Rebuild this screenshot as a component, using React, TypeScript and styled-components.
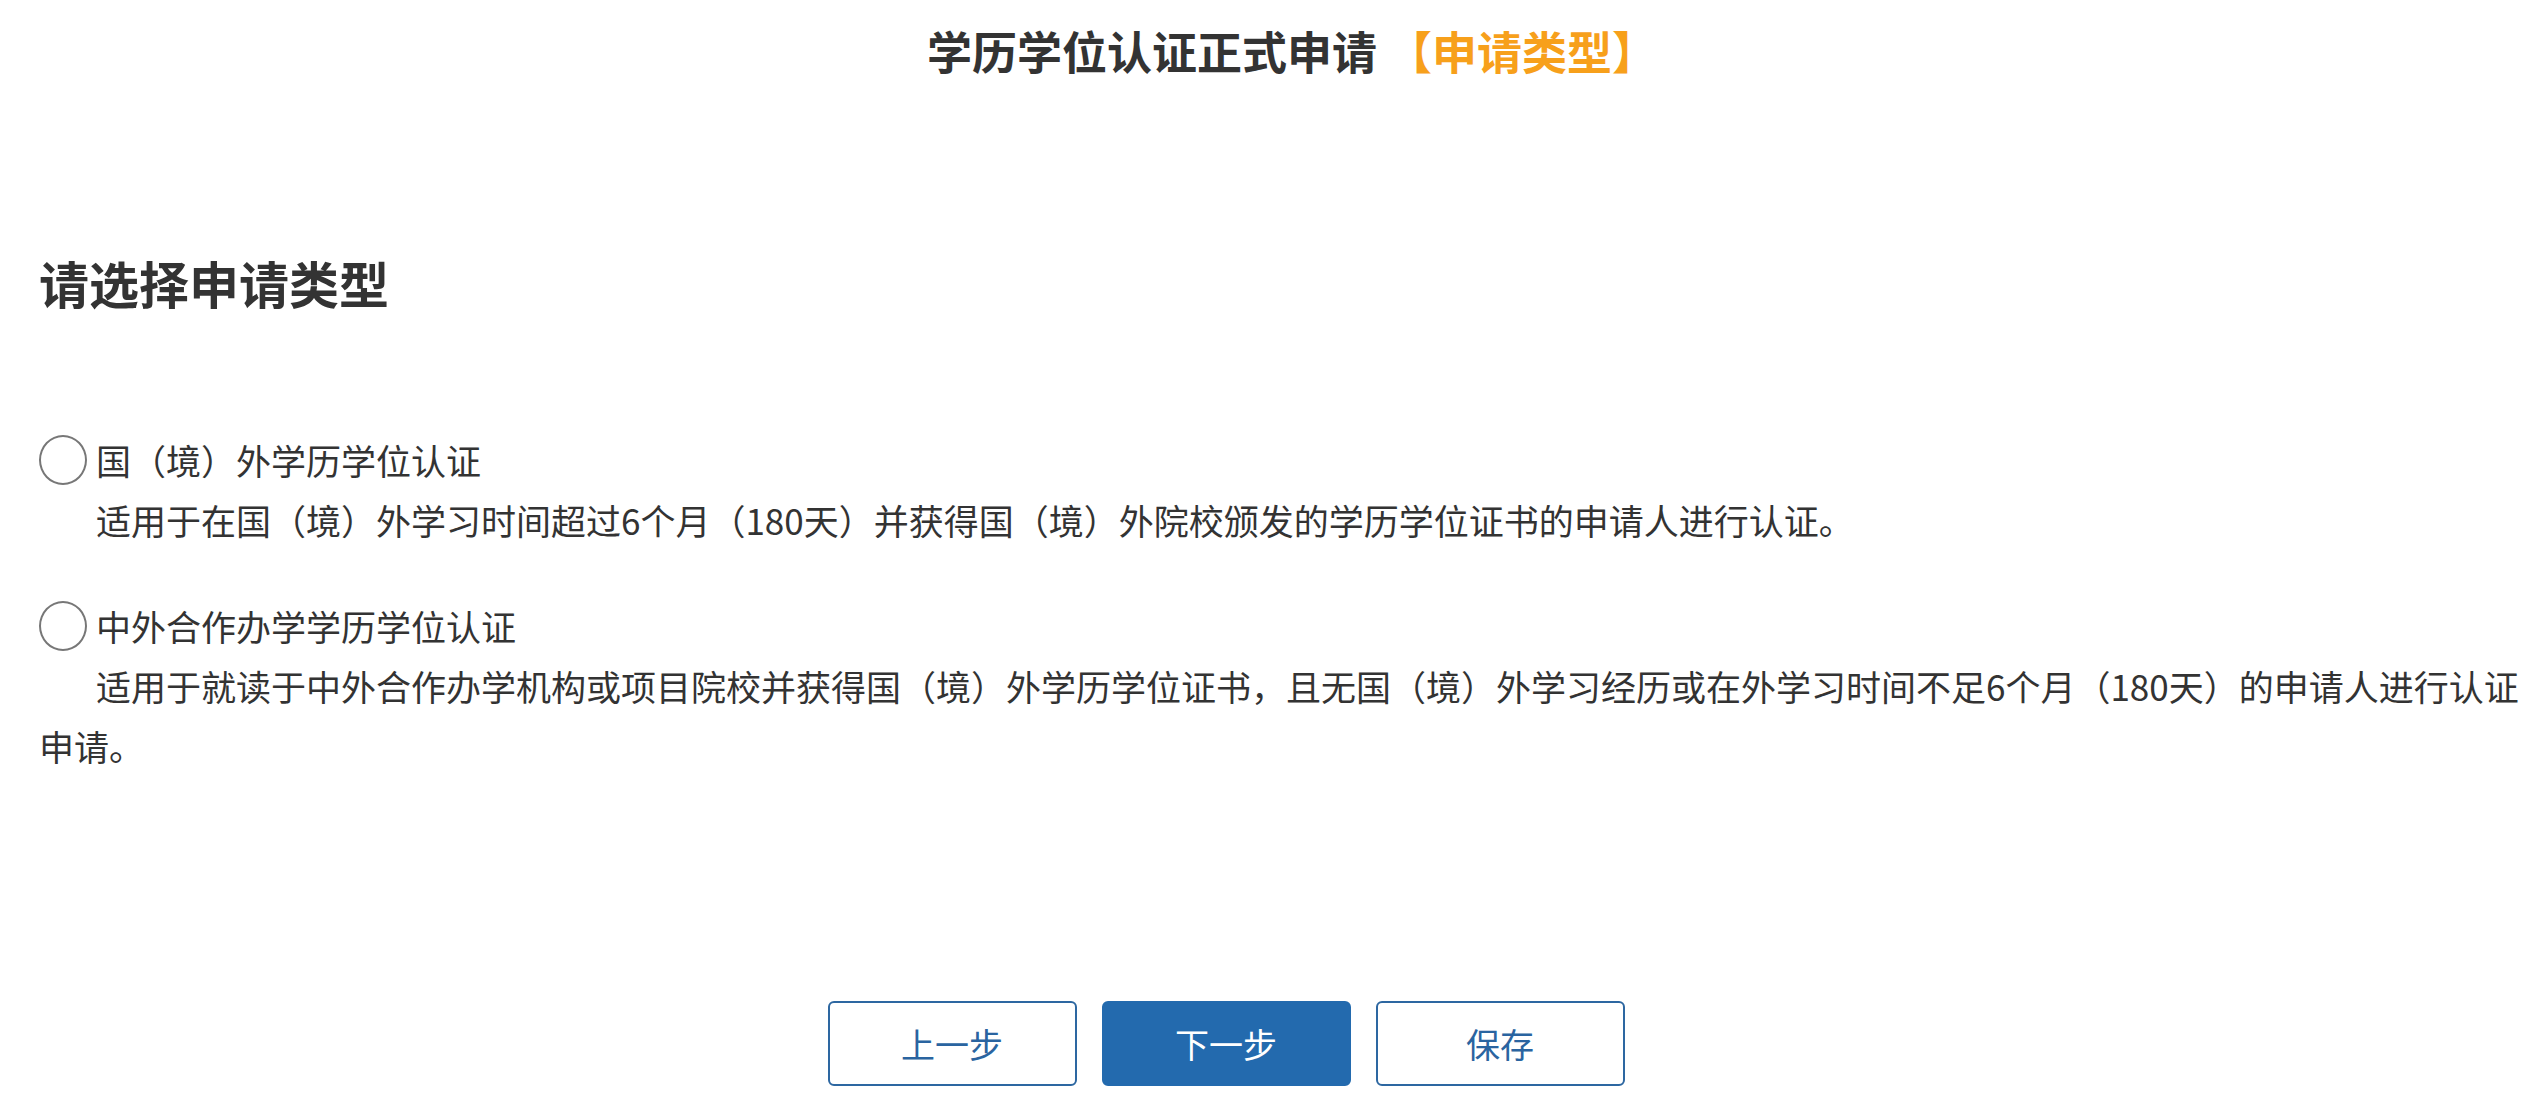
import styled, { createGlobalStyle } from 'styled-components';

const GlobalStyle = createGlobalStyle`
  html, body {
    margin: 0;
    padding: 0;
    background: #ffffff;
  }
  body {
    font-family: "Noto Sans CJK SC", "Noto Sans", sans-serif;
    color: #333333;
  }
`;

const Page = styled.div`
  padding: 0 0 0 39px;
  box-sizing: border-box;
  width: 2545px;
`;

const Title = styled.h1`
  margin: 0;
  padding-top: 22px;
  line-height: 58px;
  font-size: 45px;
  font-weight: 700;
  text-align: center;
  color: #333333;
`;

const Highlight = styled.span`
  color: #f7a01b;
`;

const Heading = styled.h2`
  margin: 167px 0 0;
  line-height: 70px;
  font-size: 50px;
  font-weight: 700;
  color: #333333;
`;

const OptionList = styled.div`
  margin-top: 113px;
  display: flex;
  flex-direction: column;
  gap: 46px;
`;

const Option = styled.div`
  font-size: 35px;
  line-height: 60px;
  color: #333333;
`;

const OptionLabel = styled.label`
  display: flex;
  align-items: center;
  height: 60px;
  cursor: pointer;
`;

const Radio = styled.span<{ $checked?: boolean }>`
  width: 48px;
  height: 50px;
  box-sizing: border-box;
  border: 2px solid #777777;
  border-radius: 50%;
  margin-right: 9px;
  flex-shrink: 0;
  background: ${p => (p.$checked ? '#236aae' : '#ffffff')};
`;

const Description = styled.p`
  margin: 0;
  text-indent: 57px;
`;

const ButtonArea = styled.div`
  margin-top: 225px;
  display: flex;
  justify-content: center;
  gap: 25px;
  padding-right: 132px;
`;

const StepButton = styled.button<{ $primary?: boolean }>`
  width: 249px;
  height: 85px;
  box-sizing: border-box;
  border: 2px solid ${p => (p.$primary ? '#236aae' : '#2d67a1')};
  border-radius: 6px;
  background: ${p => (p.$primary ? '#236aae' : '#ffffff')};
  color: ${p => (p.$primary ? '#ffffff' : '#2a64a0')};
  font-family: "Noto Sans CJK SC", "Noto Sans", sans-serif;
  font-size: 34px;
  cursor: pointer;
`;

const options = [
  {
    label: '国（境）外学历学位认证',
    desc: '适用于在国（境）外学习时间超过6个月（180天）并获得国（境）外院校颁发的学历学位证书的申请人进行认证。',
  },
  {
    label: '中外合作办学学历学位认证',
    desc: '适用于就读于中外合作办学机构或项目院校并获得国（境）外学历学位证书，且无国（境）外学习经历或在外学习时间不足6个月（180天）的申请人进行认证申请。',
  },
];

const App = () => {
  return (
    <>
      <GlobalStyle />
      <Page>
        <Title>
          学历学位认证正式申请 <Highlight>【申请类型】</Highlight>
        </Title>
        <Heading>请选择申请类型</Heading>
        <OptionList>
          {options.map(o => (
            <Option key={o.label}>
              <OptionLabel>
                <Radio />
                {o.label}
              </OptionLabel>
              <Description>{o.desc}</Description>
            </Option>
          ))}
        </OptionList>
        <ButtonArea>
          <StepButton>上一步</StepButton>
          <StepButton $primary>下一步</StepButton>
          <StepButton>保存</StepButton>
        </ButtonArea>
      </Page>
    </>
  );
};

export default App;
